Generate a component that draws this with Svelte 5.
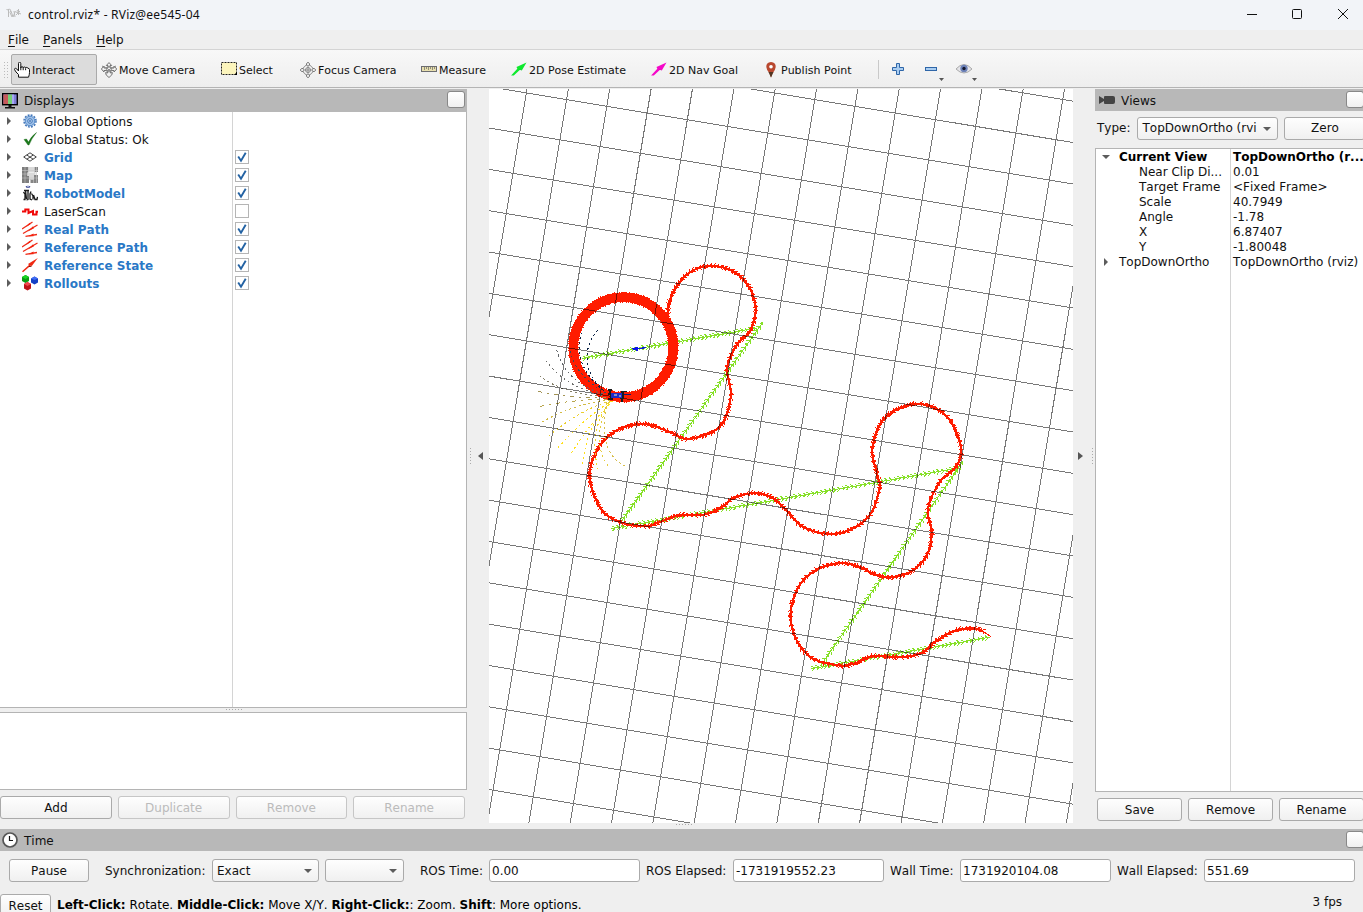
<script>
  const tools = [
    { id: 'hand', label: 'Interact', w: 86, active: true },
    { id: 'move', label: 'Move Camera', w: 120 },
    { id: 'select', label: 'Select', w: 79 },
    { id: 'focus', label: 'Focus Camera', w: 121 },
    { id: 'ruler', label: 'Measure', w: 90 },
    { id: 'pose', label: '2D Pose Estimate', w: 140 },
    { id: 'nav', label: '2D Nav Goal', w: 112 },
    { id: 'pin', label: 'Publish Point', w: 119 }
  ];
  const displays = [
    { icon: 'gear', name: 'Global Options' },
    { icon: 'check', name: 'Global Status: Ok' },
    { icon: 'grid', name: 'Grid', on: true },
    { icon: 'map', name: 'Map', on: true },
    { icon: 'robot', name: 'RobotModel', on: true },
    { icon: 'laser', name: 'LaserScan', on: false },
    { icon: 'path', name: 'Real Path', on: true },
    { icon: 'path', name: 'Reference Path', on: true },
    { icon: 'arrow', name: 'Reference State', on: true },
    { icon: 'cubes', name: 'Rollouts', on: true }
  ];
  const view = [
    ['Near Clip Di...', '0.01'],
    ['Target Frame', '<Fixed Frame>'],
    ['Scale', '40.7949'],
    ['Angle', '-1.78'],
    ['X', '6.87407'],
    ['Y', '-1.80048']
  ];
  const clocks = [
    { label: 'ROS Time:', value: '0.00', lw: 69 },
    { label: 'ROS Elapsed:', value: '-1731919552.23', lw: 87 },
    { label: 'Wall Time:', value: '1731920104.08', lw: 70 },
    { label: 'Wall Elapsed:', value: '551.69', lw: 87 }
  ];

  // Ground grid: unit vectors (cx, sx) and (-sx, cx) from one known crossing.
  const cx = 40.23, sx = 6.7, ox = 526.4, oy = 92.9;
  let grid = '';
  for (let i = -6; i < 24; i++) {
    const ax = ox - sx * i, ay = oy + cx * i;
    grid += `M${ax - cx * 8} ${ay - sx * 8}L${ax + cx * 22} ${ay + sx * 22}`;
    const bx = ox + cx * i, by = oy + sx * i;
    grid += `M${bx + sx * 8} ${by - cx * 8}L${bx - sx * 24} ${by + cx * 24}`;
  }

  const track = [
    [668.3, 318], [669.5, 303], [677, 286], [692, 271], [713, 265.7], [734, 271.5], [749, 286], [756, 308], [751, 330],
    [737, 345], [727.6, 368], [731.2, 396.7], [720, 426.7], [689, 438.6], [670, 431.7], [640, 423.7], [606, 438],
    [590, 473.3], [601, 508], [620, 521.7], [645, 526], [663.3, 520.7], [680, 515], [705, 514.3], [721.7, 507.3],
    [733.3, 498.3], [753.3, 493], [771, 496.5], [785, 508.3], [803.3, 526.7], [830, 533.7], [853.3, 528.3],
    [871.7, 512.5], [880, 486.7], [877.3, 473.3], [872.9, 447], [886, 417], [917, 403.7], [946, 415], [960.5, 443.3],
    [957.5, 465], [940, 482], [928.3, 509], [932, 533.3], [926.7, 556], [911, 571.5], [890, 577.3], [873.3, 573.3],
    [860, 566.7], [841.7, 563], [819, 568.3], [800, 585], [791, 613.3], [797, 640], [813.3, 658.3], [840, 665.3],
    [856.7, 662.7], [873.3, 656], [903.3, 657], [923.3, 652], [936.7, 640.7], [956.7, 630], [974, 628.3], [983, 630.5]
  ];

  function spline(p) {
    const out = [];
    for (let i = 0; i < p.length - 1; i++) {
      const a = p[Math.max(0, i - 1)], b = p[i], c = p[i + 1], d = p[Math.min(p.length - 1, i + 2)];
      for (let k = 0; k < 12; k++) {
        const t = k / 12;
        out.push([0, 1].map((j) =>
          0.5 * (2 * b[j] + (c[j] - a[j]) * t + (2 * a[j] - 5 * b[j] + 4 * c[j] - d[j]) * t * t +
            (3 * b[j] - a[j] - 3 * c[j] + d[j]) * t * t * t)));
      }
    }
    out.push(p[p.length - 1]);
    return out;
  }
  function heads(pts, step, len, ang) {
    let d = '', acc = 0, n = 0;
    for (let i = 1; i < pts.length; i++) {
      const [x0, y0] = pts[i - 1], [x, y] = pts[i];
      acc += Math.hypot(x - x0, y - y0);
      if (acc < step) continue;
      acc = 0;
      n++;
      const a = Math.atan2(y - y0, x - x0);
      const l = len * (n % 3 ? 1 : 0.7);
      for (const s of [-1, 1]) {
        d += `M${x.toFixed(1)} ${y.toFixed(1)}L${(x + l * Math.cos(a + s * ang)).toFixed(1)} ${(y + l * Math.sin(a + s * ang)).toFixed(1)}`;
      }
    }
    return d;
  }
  const line = (a, b) => Array.from({ length: 401 }, (_, i) => [a[0] + ((b[0] - a[0]) * i) / 400, a[1] + ((b[1] - a[1]) * i) / 400]);
  const curve = spline(track);
  const redLine = 'M' + curve.map((q) => q[0].toFixed(1) + ' ' + q[1].toFixed(1)).join('L');
  const redHeads = heads(curve, 2.6, 4.2, 0.6);
  const ring = Array.from({ length: 721 }, (_, i) => [623.7 + 50 * Math.cos((i * Math.PI) / 360), 347 + 50 * Math.sin((i * Math.PI) / 360)]);
  const ringHeads = heads(ring, 2, 5.7, 1.35);
  const greens = [
    [[757, 328], [582, 358.3]],
    [[763, 322], [621.7, 521]],
    [[957, 468.3], [611, 528.7]],
    [[963, 461.5], [821, 665]],
    [[990, 637.2], [811, 668.7]]
  ];
  const greenHeads = greens.map(([a, b]) => heads(line(b, a), 3.9, 4, 2.45)).join('');
  const greenLine = greens.map(([a, b]) => `M${a}L${b}`).join('');

  const rollouts = [
    ['#0c2347', 'M600 386Q587 374 587 358Q587 342 597.5 330.5'],
    ['#0c2347', 'M604 391Q581 372 579.5 352Q579 340 582 333'],
    ['#3d4a58', 'M606 393Q576 377 570 350'],
    ['#62666b', 'M603 394Q565 382 556.5 349'],
    ['#6d6e6c', 'M602 395Q566 387 546.5 361.5'],
    ['#858069', 'M602 396Q563 394 540 376'],
    ['#a39455', 'M606 398Q566 398 536 391'],
    ['#b9a64f', 'M608 399Q566 400 536 407.5'],
    ['#d3bb45', 'M610 400Q576 403 541 422.5'],
    ['#ebcf2e', 'M611 401Q580 409 546.5 438'],
    ['#ffe01a', 'M612 401Q586 416 556 450'],
    ['#ffe01a', 'M613 401Q592 420 569.5 456'],
    ['#ffe01a', 'M613 401Q585 425 582.5 467'],
    ['#f2d62c', 'M610 402Q588 430 598 469'],
    ['#e5cc3d', 'M609 402Q589 443 610 468'],
    ['#d7bf4d', 'M607 402Q596 455 628 467']
  ];
</script>

{#snippet icon(id)}
  <svg class="ico" width="16" height="16" viewBox="0 0 16 16" fill="none">
    {#if id === 'hand'}
      <path d="M4.500 9V1.500q0-1.300 1.100-1.300t1.200 1.300v4.500q0-1.300 1.200-1.300t1.200 1.200q.1-.9 1.200-.9t1.200 1.100q.1-.7 1.100-.7t1.200.9q1.600-.1 1.600 1.300v2.700q0 2.500-1 4.900H4.500V12.500L2 10 .6 7.700q-.3-1.400 1-1.400 1 0 2.900 2.700z" fill="#fff" stroke="#111" />
      <path d="M6.800 5.500v2.700M9.200 6v2.200M11.600 6.300v1.900" stroke="#111" />
    {:else if id === 'move'}
      <path d="M8 .6 10.700 3.500H9V6h4V4l2.700 3-2.700 3V8.500H9.400V11l2-.4-.6 2.300L8 15.500 5.200 13l-.6-2.400 2 .4V8.500H3V10L.4 7 3 4v2h4V3.500H5.300z" stroke="#666" stroke-width=".9" />
      <circle cx="8" cy="7.200" r="2.700" stroke="#888" /><path d="M1 4 5 6M15 4l-4 2M5 10.500l6-5M5 5.500l6 5" stroke="#888" />
    {:else if id === 'select'}
      <rect x=".5" y="0.500" width="15" height="12" fill="#fcf5bd" stroke="#222" stroke-dasharray="2 1" /><path d="M16 10v3h-3z" fill="#000" />
    {:else if id === 'focus'}
      <circle cx="8" cy="8" r="5" stroke="#888" /><circle cx="8" cy="8" r="2.500" stroke="#888" />
      <path d="M8 3v10M3 8h10" stroke="#888" />
      <path d="M6.500 3V1.500L8 .3l1.500 1.200V3M6.500 13v1.500L8 15.700l1.500-1.200V13M3 6.500H1.500L.3 8l1.200 1.500H3M13 6.500h1.500L15.700 8l-1.200 1.500H13" stroke="#777" fill="#eee" />
    {:else if id === 'ruler'}
      <rect x=".5" y="4.500" width="15" height="5" fill="#e8dfae" stroke="#6c6c70" /><path d="M3.500 5v3M5.500 5v2M7.500 5v3M9.500 5v2M11.500 5v3M13.500 5v2" stroke="#77776a" stroke-width=".8" />
    {:else if id === 'pose' || id === 'nav'}
      <path d="M.3 13.200 6.300 6.800 5.500 5 15.500.6 10.800 8.600 9 7.800 2.800 13.600H.2z" fill={id === 'pose' ? '#0ee92e' : '#f508c8'} />
      <path d="M7 6.500 10.800 8.600 9 7.800z" fill={id === 'pose' ? '#045c12' : '#6d0259'} />
    {:else if id === 'pin'}
      <path d="M8 0Q13 .4 12.700 5 12.300 8.500 9.500 11.500L8 15.500 6.500 11.500Q3.700 8.500 3.300 5 3 .4 8 0z" fill="#b9482f" /><path d="M5.500 10h5L8 15.500z" fill="#523522" /><circle cx="8" cy="4.800" r="1.800" fill="#fff" />
    {:else if id === 'gear'}
      <circle cx="8" cy="8" r="6" stroke="#3f74b8" stroke-width="1.500" stroke-dasharray="1.900 1.240" /><circle cx="8" cy="8" r="4.800" fill="#9fc1e8" stroke="#4f86c8" /><circle cx="8" cy="8" r="2.300" fill="#c5daf2" stroke="#4378bb" /><circle cx="8" cy="8" r="1" fill="#4378bb" />
    {:else if id === 'check'}
      <path d="M2 8.500 4.500 8 6.500 11Q9 5.500 14.500 1.500 9.500 7.500 7 14H6z" fill="#1b7a1b" stroke="#176517" stroke-width=".4" />
    {:else if id === 'grid'}
      <path d="M8 3.800 14.300 8 8 12.200 1.700 8zM4.800 6 11.200 10.200M11.200 6 4.800 10.200" stroke="#444" />
    {:else if id === 'map'}
      <path d="M0 0h6.500v5.500H5.500V9H7v7H0z" fill="#7d7d7d" /><path d="M6.500 0H12v5H6.500zM12 5h1.500v4H12zM5.500 5.500H12V12H9v1H7V9H5.500z" fill="#d9d9d9" /><path d="M12.500 0H16v5h-3.500zM12 8h4v5h-4zM8.500 12.500H16V16H8.500z" fill="#858585" /><path d="M3 0v16M0 3.500h16M0 7h6M0 11h16M14.500 0v16M11.500 12v4" stroke="#c8c8c8" stroke-width=".6" />
    {:else if id === 'robot'}
      <path d="M3.500 1.800Q6-.5 8.500 1.800 6 4.300 3.500 1.800z" fill="#28368b" /><path d="M5 1.800h2" stroke="#fff" stroke-width=".8" /><path d="M2 5.500h5M1.500 7 3 9v5.500H1.500M3.500 5.500 4.500 14M6 6v8.500L4.500 15M9 6.500 8 9v5l2 1M9.500 8.500 11 11v3.500M11.500 10l1.500 4.500h2l.5-2.500" stroke="#1a1a1a" stroke-width="1.300" />
    {:else if id === 'laser'}
      <path d="M0 8.500H3.300V6.500H6.500V10l4.500-2v3.500h3.500V8.800H16" stroke="#f00808" stroke-width="2" />
    {:else if id === 'path'}
      <path d="M0 8 10.500 1M1 12.500 15.500 4M3.500 15.300 15 13.500" stroke="#ef2b18" stroke-width="1.300" /><path d="M4 6 7.500 1.800 8.500 3.300zM6 10.500 11 5.200l1 2zM6.500 15.300 11.500 12.600v2.600z" fill="#f3220e" />
    {:else if id === 'arrow'}
      <path d="M0 14.300 7 8 6 7 15.800 1 9.800 9 8.800 8.600 1 15.200z" fill="#f02912" /><path d="M6.800 9.500 9.500 9.300" stroke="#7b1509" />
    {:else if id === 'cubes'}
      <path d="M0 2 3.500 0 7 2v4L3.500 8 0 6z" fill="#0a9b12" /><path d="M0 2 3.500 0 7 2 3.500 4z" fill="#1ad522" /><path d="M9 3.500 12.500 1.500 16 3.500v4L12.500 9.500 9 7.500z" fill="#143fc4" /><path d="M9 3.500 12.500 1.500 16 3.500 12.500 5z" fill="#3f6cf5" /><path d="M2 9 5.500 7 9 9v4.500L5.500 15.500 2 13.500z" fill="#be1218" /><path d="M2 9 5.500 7 9 9 5.500 11z" fill="#f0494d" />
    {/if}
  </svg>
{/snippet}

{#snippet tri(down)}
  <svg class="tri" width="8" height="8" viewBox="0 0 8 8"><path d={down ? 'M0 2h8L4 6z' : 'M2 0l4 4-4 4z'} fill="#5c5c5c" /></svg>
{/snippet}

<div class="app">
  <header class="title">
    <svg width="16" height="12" viewBox="0 0 16 12" fill="none" stroke="#bbb"><path d="M.5 1.500 2.500 2v7M2 1.500q4-1 2 3l2 4.500M5 3l2 6 2.500-6M8 3l1 6M11 2l2 3M10 7l4-4M10 4l5 2M12.500 1v6" /></svg>
    <span class="name">control.rviz* - RViz@ee545-04</span>
    <svg class="win" width="104" height="12" viewBox="0 0 104 12" fill="none" stroke="#111"><path d="M0 6.500h10M91 1l10 10M101 1 91 11" /><rect x="45.500" y="1.500" width="9" height="9" rx="1" /></svg>
  </header>
  <nav class="menu"><span><u>F</u>ile</span><span><u>P</u>anels</span><span><u>H</u>elp</span></nav>

  <div class="toolbar">
    <i class="grip"></i>
    {#each tools as t}
      <div class="tool" class:active={t.active} style="width:{t.w}px">{@render icon(t.id)}<span>{t.label}</span></div>
    {/each}
    <i class="sep"></i>
    <svg class="extras" width="90" height="22" viewBox="0 0 90 22">
      <path d="M8.500 4.500h3v4h4v3h-4v4h-3v-4h-4v-3h4z" fill="#a9cdf1" stroke="#2f66a8" />
      <rect x="37.500" y="8.500" width="11" height="3" fill="#a9cdf1" stroke="#2f66a8" />
      <path d="M51 19h5l-2.500 3zM84 19h5l-2.500 3z" fill="#555" />
      <path d="M68 10q8-9 16 0-8 8-16 0z" fill="#e5e5e9" stroke="#aaa" /><circle cx="76" cy="9.500" r="3.700" fill="#6d82b8" /><circle cx="76" cy="9.500" r="1.700" fill="#14182f" />
    </svg>
  </div>

  <main>
    <section class="left">
      <div class="head">
        <svg width="16" height="16" viewBox="0 0 16 16"><rect x=".7" y=".7" width="14.600" height="11" fill="#8080d8" stroke="#000" stroke-width="1.400" /><path d="M1.400 1.400H6V11H1.400z" fill="#c65a5a" /><path d="M6 1.400h4V11H6z" fill="#76cf76" /><path d="M10 1.400h2V11h-2z" fill="#a8a8f4" /><path d="M6.500 12h3v2H13v1.500H3V14h3.500z" fill="#111" /></svg>
        <span>Displays</span><b class="close"></b>
      </div>
      <div class="tree">
        {#each displays as d}
          <div class="row">
            {@render tri(false)}{@render icon(d.icon)}
            <span class="label" class:hot={d.on}>{d.name}</span>
            {#if d.on !== undefined}
              <span class="box">{#if d.on}<svg width="12" height="12" viewBox="0 0 12 12"><path d="M2.200 5.500 5 9.700 9.700 1.800" fill="none" stroke="#2362a3" stroke-width="1.900" /></svg>{/if}</span>
            {/if}
          </div>
        {/each}
      </div>
      <div class="split"><i class="dots"></i></div>
      <div class="desc"></div>
      <div class="btns">
        <button>Add</button><button disabled>Duplicate</button><button disabled>Remove</button><button disabled>Rename</button>
      </div>
    </section>

    <div class="handle l"><i class="vd"></i><svg width="5" height="8" viewBox="0 0 5 8"><path d="M5 0v8L0 4z" fill="#555" /></svg></div>

    <svg class="scene" width="584" height="734" viewBox="489 89 584 734" fill="none" shape-rendering="crispEdges">
      <g stroke="#86e028"><path d={greenLine} /><path d={greenHeads} /></g>
      <g stroke="#ff1c00" transform="translate(-.4 .2)">
        <path d={redLine} stroke-width="2.200" /><path d={redHeads} /><path d="M982 630 991.500 636.500M982 631l5 2.500" />
        <circle cx="623.700" cy="347" r="50" stroke-width="9.600" /><path d={ringHeads} />
      </g>
      {#each rollouts as [c, d], i}
        <path {d} stroke={c} stroke-dasharray={i === 6 || i === 7 ? '4 5 2 5' : '2 3'} />
      {/each}
      <path d={grid} stroke="#000" stroke-opacity=".53" />
      <path d="M631 349 638 346.500V348l8-1v1.200l-8 1V351z" fill="#0a12e8" />
      <path d="M608 389h4v2h-1v7h2v2h-5v-2h2v-3h-2v-2h1zM621 391h6v1h-3v7h-1v3h-2v-3h-1v-4h1z" fill="#1a1a1a" />
      <path d="M611 392.500h11v5h-11z" fill="#1d2cc9" /><path d="M614 394h3v2h-3zM619 395h2v2h-2z" fill="#8a93c4" /><path d="M624 394.500h7" stroke="#101d70" />
    </svg>

    <div class="handle r"><svg width="5" height="8" viewBox="0 0 5 8"><path d="M0 0v8l5-4z" fill="#555" /></svg><i class="vd"></i></div>

    <section class="right">
      <div class="head">
        <svg width="16" height="10" viewBox="0 0 16 10"><path d="M0 1 5 4V2q0-1 1-1h8q2 0 2 2v4q0 2-2 2H6Q5 9 5 8V6L0 9z" fill="#444" /></svg>
        <span>Views</span><b class="close"></b>
      </div>
      <div class="type"><span>Type:</span><div class="combo"><span>TopDownOrtho (rvi</span>{@render tri(true)}</div><button>Zero</button></div>
      <div class="props">
        <div class="pr bold"><span class="k">{@render tri(true)}Current View</span><span>TopDownOrtho (r...</span></div>
        {#each view as [k, v]}
          <div class="pr"><span class="k sub">{k}</span><span>{v}</span></div>
        {/each}
        <div class="pr"><span class="k">{@render tri(false)}TopDownOrtho</span><span>TopDownOrtho (rviz)</span></div>
      </div>
      <div class="btns"><button>Save</button><button>Remove</button><button>Rename</button></div>
    </section>
  </main>

  <div class="gap"><i class="dots"></i></div>
  <div class="head time">
    <svg width="16" height="16" viewBox="0 0 16 16"><circle cx="8" cy="8" r="7" fill="#fff" stroke="#555" stroke-width="1.700" /><path d="M7.500 4v4.500H11" fill="none" stroke="#111" stroke-width="1.200" /></svg>
    <span>Time</span><b class="close"></b>
  </div>
  <div class="clock">
    <button class="pause">Pause</button>
    <span class="sync">Synchronization:</span>
    <div class="combo exact"><span>Exact</span>{@render tri(true)}</div>
    <div class="combo empty">{@render tri(true)}</div>
    {#each clocks as c}
      <span class="cl" style="width:{c.lw}px">{c.label}</span><div class="field">{c.value}</div>
    {/each}
  </div>
  <footer>
    <button class="reset">Reset</button>
    <p><b>Left-Click:</b> Rotate. <b>Middle-Click:</b> Move X/Y. <b>Right-Click:</b>: Zoom. <b>Shift</b>: More options.</p>
    <span class="fps">3 fps</span>
  </footer>
</div>

<style>
  :global(body) { margin: 0; overflow: hidden; }
  .app { width: 1363px; height: 912px; overflow: hidden; display: flex; flex-direction: column; background: #efefef; color: #111; font: 12px/15px 'DejaVu Sans', sans-serif; font-kerning: none; white-space: nowrap; }
  .app * { box-sizing: border-box; }
  svg { flex: none; display: block; }
  .title { flex: none; height: 30px; display: flex; align-items: center; padding: 0 12px 2px 6px; gap: 6px; background: #f2f4f8; font: 12px 'Noto Sans', sans-serif; letter-spacing: 0.22px; }
  .win { margin-left: auto; }
  .menu { flex: none; height: 20px; display: flex; gap: 14px; padding: 3px 8px 0; border-bottom: 1px solid #d4d4d4; }
  u { text-underline-offset: 2px; }
  .toolbar { flex: none; height: 38px; display: flex; align-items: center; padding-top: 2px; background: linear-gradient(#f8f8f8, #eee); border-bottom: 1px solid #b4b4b4; font-size: 11px; }
  .grip { width: 5px; height: 18px; margin: 0 3px; background: radial-gradient(#bbb 0.7px, transparent 1px) 0 0/3px 3px; }
  .tool { flex: none; height: 31px; display: flex; align-items: center; gap: 2px; padding-left: 4px; }
  .tool span { padding-top: 1px; }
  .tool.active { background: #dcdcdc; border: 1px solid #aaa; border-radius: 2px; padding-left: 2px; }
  .sep { width: 1px; height: 19px; background: #c9c9c9; }
  .extras { margin: 1px 0 0 9px; }
  main { flex: none; height: 735px; display: flex; padding-top: 1px; }
  .left { flex: none; width: 467px; display: flex; flex-direction: column; }
  .head { position: relative; flex: none; height: 23px; display: flex; align-items: center; background: #b8b8b8; padding-left: 2px; gap: 6px; }
  .head span { padding-top: 2px; }
  .close { position: absolute; right: 2px; top: 2px; width: 18px; height: 17px; border: 1px solid #888; border-radius: 3px; background: linear-gradient(#fff, #f0f0f0); }
  .tree { height: 596px; border: solid #b4b4b4; border-width: 0 1px 1px 0; background: linear-gradient(90deg, #fff 232px, #d4d4d4 232px, #d4d4d4 233px, #fff 233px); }
  .row { height: 18px; display: flex; align-items: center; padding-left: 5px; }
  .row .ico { margin: 0 6px 0 9px; }
  .label { width: 191px; padding-top: 2px; }
  .hot { color: #2a78c6; font-weight: bold; }
  .box { width: 14px; height: 14px; border: 1px solid #b5b5b5; background: #fff; }
  .split { height: 4px; padding-left: 225px; }
  .dots { display: block; width: 18px; height: 3px; background: radial-gradient(#aaa 0.7px, transparent 1px) 0 0/3px 3px; }
  .desc { height: 78px; background: #fff; border: 1px solid #b4b4b4; border-left: 0; }
  .btns { display: grid; grid-template-columns: repeat(4, 1fr); gap: 6px; padding: 6px 2px 0 0; }
  button, .combo, .field { font: inherit; font-kerning: none; color: #111; height: 23px; border: 1px solid #aaa; border-radius: 3px; background: linear-gradient(#fefefe, #f0f0f0); padding: 1px 0 0; }
  button:disabled { color: #bbb; border-color: #c6c6c6; }
  .handle { flex: none; width: 22px; display: flex; align-items: center; padding-left: 2px; gap: 6px; }
  .handle.r { padding-left: 5px; gap: 8px; }
  .vd { width: 3px; height: 18px; background: radial-gradient(#aaa 0.7px, transparent 1px) 0 0/3px 3px; }
  .scene { background: #fff; }
  .right { width: 285px; flex: none; display: flex; flex-direction: column; }
  .right .head { height: 22px; padding-left: 4px; gap: 6px; }
  .head.time { height: 22px; }
  .time .close { right: -1px; }
  .right .head .close { right: 16px; }
  .type { display: flex; align-items: center; height: 37px; padding: 0 0 3px 2px; }
  .type .combo { width: 141px; margin: 0 6px 0 7px; }
  .type button { width: 81px; }
  .combo { display: flex; align-items: center; justify-content: space-between; padding: 1px 6px 0 4px; }
  .props { height: 644px; padding-top: 1px; border: 1px solid #b4b4b4; background: linear-gradient(90deg, #fff 134px, #d4d4d4 134px, #d4d4d4 135px, #fff 135px); }
  .pr { height: 15px; display: flex; }
  .k { width: 137px; display: flex; align-items: center; padding-left: 6px; gap: 9px; }
  .k.sub { padding-left: 43px; }
  .k .tri { margin-bottom: 2px; }
  .bold { font-weight: bold; color: #000; }
  .right .btns { grid-template-columns: repeat(3, 85px); padding-left: 2px; }
  .gap { flex: none; height: 6px; padding-left: 675px; }
  .clock { flex: none; height: 38px; padding-left: 9px; display: flex; align-items: center; }
  .clock > span { padding-top: 3px; }
  .clock .pause { width: 80px; padding-top: 2px; }
  .sync { width: 107px; margin-left: 16px; }
  .exact { width: 107px; }
  .exact span { padding-top: 1px; }
  .empty { width: 79px; margin: 0 16px 0 6px; justify-content: flex-end; }
  .field { width: 151px; background: #fff; padding: 4px 2px 0; margin-right: 6px; }
  footer { display: flex; height: 23px; align-items: flex-start; margin-top: 5px; }
  .reset { flex: none; width: 51px; height: 24px; }
  p { margin: 4px 0 0 6px; color: #000; }
  .fps { margin: 1px 21px 0 auto; }
</style>
